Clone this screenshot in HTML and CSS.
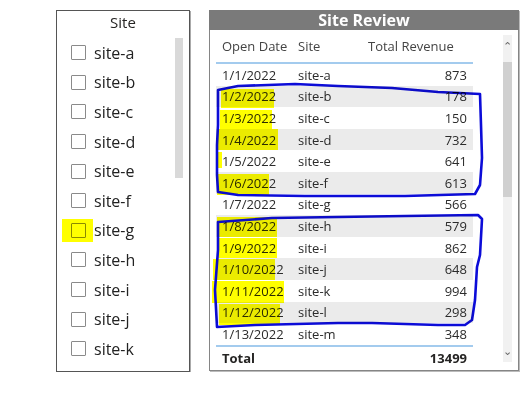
FILE: index.html
```html
<!DOCTYPE html>
<html lang="en">
<head>
    <meta charset="UTF-8">
    <title>Site Review</title>
    <link rel="stylesheet" href="styles.css">
</head>
<body>
    <div class="page">
        <!-- slicer -->
        <div class="slicer">
            <div class="slicerTitle">Site</div>
            <div class="slicerBody">
                <div class="items">
                    <div class="item"><span class="box"></span>site-a</div>
                    <div class="item"><span class="box"></span>site-b</div>
                    <div class="item"><span class="box"></span>site-c</div>
                    <div class="item"><span class="box"></span>site-d</div>
                    <div class="item"><span class="box"></span>site-e</div>
                    <div class="item"><span class="box"></span>site-f</div>
                    <div class="item"><span class="box"></span>site-g</div>
                    <div class="item"><span class="box"></span>site-h</div>
                    <div class="item"><span class="box"></span>site-i</div>
                    <div class="item"><span class="box"></span>site-j</div>
                    <div class="item"><span class="box"></span>site-k</div>
                </div>
                <div class="slicerThumb"></div>
            </div>
        </div>

        <!-- table visual -->
        <div class="visual">
            <div class="visualTitle">Site Review</div>
            <div class="visualBody">
                <table class="grid">
                    <colgroup>
                        <col class="cDate"><col class="cSite"><col class="cRev">
                    </colgroup>
                    <thead>
                        <tr><th>Open Date</th><th>Site</th><th>Total Revenue</th></tr>
                    </thead>
                    <tbody>
                        <tr><td>1/1/2022</td><td>site-a</td><td class="num">873</td></tr>
                        <tr><td>1/2/2022</td><td>site-b</td><td class="num">178</td></tr>
                        <tr><td>1/3/2022</td><td>site-c</td><td class="num">150</td></tr>
                        <tr><td>1/4/2022</td><td>site-d</td><td class="num">732</td></tr>
                        <tr><td>1/5/2022</td><td>site-e</td><td class="num">641</td></tr>
                        <tr><td>1/6/2022</td><td>site-f</td><td class="num">613</td></tr>
                        <tr><td>1/7/2022</td><td>site-g</td><td class="num">566</td></tr>
                        <tr><td>1/8/2022</td><td>site-h</td><td class="num">579</td></tr>
                        <tr><td>1/9/2022</td><td>site-i</td><td class="num">862</td></tr>
                        <tr><td>1/10/2022</td><td>site-j</td><td class="num">648</td></tr>
                        <tr><td>1/11/2022</td><td>site-k</td><td class="num">994</td></tr>
                        <tr><td>1/12/2022</td><td>site-l</td><td class="num">298</td></tr>
                        <tr><td>1/13/2022</td><td>site-m</td><td class="num">348</td></tr>
                    </tbody>
                    <tfoot>
                        <tr><td>Total</td><td></td><td class="num">13499</td></tr>
                    </tfoot>
                </table>
                <div class="scroll">
                    <span class="arrow">&#8963;</span>
                    <div class="thumb"></div>
                    <span class="arrow down">&#8964;</span>
                </div>
            </div>
        </div>
    </div>

    <!-- hand drawn marks on top of the screenshot -->
    <svg class="marks" width="532" height="408" viewBox="0 0 532 408">
        <g class="hl">
            <rect x="62" y="219" width="31" height="23"/>
            <rect x="221" y="89" width="53" height="19"/>
            <rect x="220" y="110" width="52" height="19"/>
            <rect x="217" y="129" width="61" height="21"/>
            <rect x="217" y="152" width="5" height="16"/>
            <rect x="217" y="174" width="52" height="21"/>
            <rect x="217" y="217" width="60" height="20"/>
            <rect x="217" y="238" width="60" height="20"/>
            <rect x="213" y="259" width="62" height="21"/>
            <rect x="212" y="281" width="72" height="22"/>
            <rect x="219" y="304" width="61" height="21"/>
        </g>
        <g class="pen">
            <path d="M218,90 L238,86 L295,84 L338,86 L392,88 L438,92 L480,94 L481,125 L482,158 L480,185 L475,194 L405,196 L305,196 L238,195 L218,192 L217,175 L217,145 L218,125 Z"/>
            <path d="M218,222 L272,218 L338,217 L405,216 L478,215 L482,219 L480,255 L477,267 L475,300 L472,320 L465,325 L438,325 L372,323 L338,323 L255,325 L217,327 L215,290 L218,250 Z"/>
        </g>
    </svg>
</body>
</html>
```

FILE: styles.css
```css
body
{
    margin: 0;
    background: #fff;
    font-family: "Open Sans", "Noto Sans", sans-serif;
    color: #252423;
}
.page
{
    display: flex;
    gap: 19px;
    padding: 10px 0 0 56px;
}

/* slicer */
.slicer
{
    box-sizing: border-box;
    width: 134px;
    height: 362px;
    border: 1px solid #555;
    box-shadow: 1px 1px 0 #aaa;
    display: flex;
    flex-direction: column;
}
.slicerTitle
{
    height: 27px;
    line-height: 23px;
    text-align: center;
    font-size: 15px;
}
.slicerBody
{
    flex: 1;
    display: flex;
    overflow: hidden;
}
.items
{
    flex: 1;
}
.item
{
    display: flex;
    align-items: center;
    gap: 8px;
    height: 29.6px;
    padding-left: 14px;
    font-size: 16px;
    color: #222;
}
.box
{
    box-sizing: border-box;
    width: 15px;
    height: 15px;
    border: 1px solid #8a8a8a;
    border-radius: 1px;
}
.slicerThumb
{
    width: 8px;
    height: 141px;
    margin: -1px 6px 0 0;
    background: #d9d9d9;
}

/* table visual */
.visual
{
    box-sizing: border-box;
    width: 310px;
    height: 361px;
    border: 1px solid #858585;
    box-shadow: 1px 1px 0 #bbb;
    display: flex;
    flex-direction: column;
}
.visualTitle
{
    height: 20px;
    margin: -1px -1px 0;
    background: #7a7a7a;
    color: #fff;
    font-weight: bold;
    font-size: 16px;
    line-height: 21px;
    text-align: center;
}
.visualBody
{
    flex: 1;
    display: flex;
    padding-left: 6px;
}
.grid
{
    border-collapse: collapse;
    table-layout: fixed;
    width: 257px;
    font-size: 13px;
    align-self: flex-start;
}
.cDate{width: 76px;}
.cSite{width: 70px;}
.cRev{width: 111px;}
.grid th
{
    height: 32px;
    padding: 0 6px;
    text-align: left;
    font-weight: normal;
    white-space: nowrap;
    color: #444;
    border-bottom: 2px solid #a3cbee;
}
.grid td
{
    height: 21.6px;
    padding: 0 6px;
    white-space: nowrap;
    color: #2b2b2b;
}
.grid tbody tr:nth-child(even) td
{
    background: #ebebeb;
}
.grid tfoot td
{
    height: 22px;
    font-weight: bold;
    color: #252423;
    border-top: 2px solid #a3cbee;
}
.num{text-align: right;}

.scroll
{
    position: relative;
    width: 9px;
    height: 327px;
    margin: 5px 0 0 30px;
    background: #f1f1f1;
}
.scroll .thumb
{
    position: absolute;
    top: 27px;
    left: 0;
    width: 9px;
    height: 135px;
    background: #d0d0d0;
}
.arrow
{
    position: absolute;
    left: 0;
    top: 6px;
    width: 9px;
    text-align: center;
    font-size: 11px;
    line-height: 12px;
    color: #666;
    font-family: "DejaVu Sans", sans-serif;
}
.arrow.down
{
    top: auto;
    bottom: 4px;
}

/* overlay marks */
.marks
{
    position: absolute;
    top: 0;
    left: 0;
    pointer-events: none;
    mix-blend-mode: multiply;
}
.hl rect{fill: #ffff00;}
.pen path
{
    fill: none;
    stroke: #0c0cd8;
    stroke-width: 2.6;
    stroke-linejoin: round;
}
```
